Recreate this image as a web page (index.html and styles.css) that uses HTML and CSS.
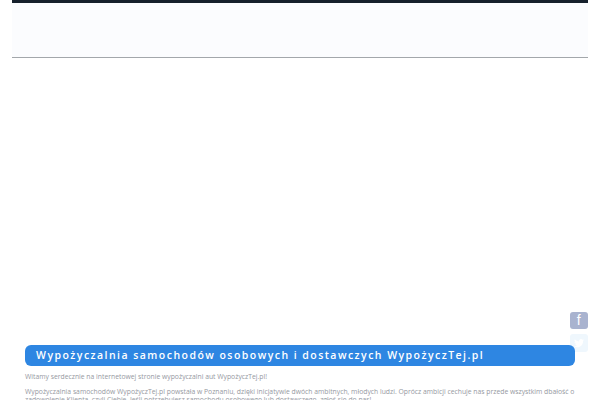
FILE: index.html
```html
<!DOCTYPE html>
<html lang="pl">
<head>
<meta charset="utf-8">
<title>WypożyczTej.pl</title>
<link rel="stylesheet" href="styles.css">
</head>
<body>
<div class="page">
  <header class="header"></header>
  <main class="content">
    <h1 class="title">Wypożyczalnia samochodów osobowych i dostawczych WypożyczTej.pl</h1>
    <p class="text">Witamy serdecznie na internetowej stronie wypożyczalni aut WypożyczTej.pl!</p>
    <p class="text">Wypożyczalnia samochodów WypożyczTej.pl powstała w Poznaniu, dzięki inicjatywie dwóch ambitnych, młodych ludzi. Oprócz ambicji cechuje nas przede wszystkim dbałość o zadowolenie Klienta, czyli Ciebie. Jeśli potrzebujesz samochodu osobowego lub dostawczego, zgłoś się do nas!</p>
  </main>
</div>
<a class="social social-fb">f</a>
<a class="social social-tw">
  <svg viewBox="0 0 24 24" width="12" height="12"><path fill="#fff" d="M22 5.900c-.7.300-1.500.5-2.300.6.800-.5 1.500-1.300 1.800-2.200-.8.500-1.700.8-2.600 1A4.100 4.100 0 0 0 12 9a11.600 11.600 0 0 1-8.500-4.300 4.100 4.100 0 0 0 1.300 5.500c-.7 0-1.300-.2-1.900-.5 0 2 1.400 3.700 3.300 4.100-.6.200-1.200.2-1.800.1.500 1.600 2 2.800 3.800 2.800A8.200 8.200 0 0 1 2 18.400 11.600 11.600 0 0 0 20 8c.8-.5 1.500-1.300 2-2.100z"/></svg>
</a>
</body>
</html>
```
FILE: styles.css
```css
html, body {
  margin: 0;
  height: 400px;
  overflow: hidden;
  background: #fff;
}
body {
  font-family: "Open Sans", "DejaVu Sans", sans-serif;
  color: #96999f;
}
.page {
  margin: 0 12px;
}
.header {
  height: 54px;
  background: #fbfcfe;
  border-top: 3px solid #16202c;
  border-bottom: 1px solid #a3a7ab;
}
.content {
  padding: 287px 13px 0;
}
.title {
  position: relative;
  z-index: 1;
  margin: 0;
  height: 21px;
  padding-left: 11px;
  background: #2e86e2;
  border-radius: 6px;
  color: #fff;
  font-size: 10.500px;
  font-weight: 600;
  line-height: 21px;
  letter-spacing: 1.460px;
  white-space: nowrap;
}
.text {
  margin: 0;
  font-size: 6.800px;
  line-height: 8px;
}
.title + .text {
  margin-top: 7px;
}
.text + .text {
  margin-top: 7px;
}
.social {
  position: absolute;
  left: 570px;
  width: 17.500px;
  height: 17.500px;
  border-radius: 3px;
  display: flex;
  align-items: center;
  justify-content: center;
  color: #fff;
  font-family: "Liberation Sans", sans-serif;
  font-size: 14px;
}
.social-fb {
  top: 311.500px;
  background: #a9b3cf;
}
.social-tw {
  top: 334px;
  background: #eff7fd;
}
```
